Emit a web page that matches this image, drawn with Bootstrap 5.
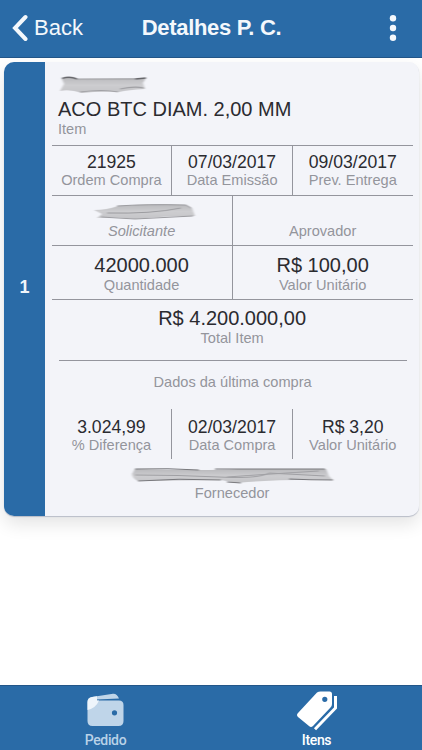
<!DOCTYPE html>
<html lang="pt-BR">
<head>
<meta charset="utf-8">
<meta name="viewport" content="width=device-width, initial-scale=1">
<title>Detalhes P. C.</title>
<link href="https://cdn.jsdelivr.net/npm/bootstrap@5.3.0/dist/css/bootstrap.min.css" rel="stylesheet">
<style>
body{font-family:"Liberation Sans",Arial,sans-serif;height:750px;background:#fff;overflow:hidden}
svg{display:block}
.topbar{height:58px;background:#2a6ba7;border-bottom:1px solid #235689;color:#f4f8fc;font-size:22px;line-height:26px;padding:0 24px 2px 11px}
.topbar a{color:inherit;width:114px;gap:6px}
.topbar h1{font-size:22px;letter-spacing:-.3px;line-height:26px}
.menu-btn{width:100px}
.order{margin:4px 3px 0 4px;height:454px;border-radius:10px;background:#f3f4f9;box-shadow:0 1px 1px #b9bdc8,0 8px 18px rgba(0,0,0,.11);overflow:hidden}
.strip{width:41px;background:#2a6ba7;color:#f0f5fa;font-size:18px;font-weight:700;padding-bottom:3px}
.details{padding:0 6.400px 0 6.600px;color:#2b2b30}
.line-row{border-top:1px solid #94959d}
.line-row>.cell+.cell,.last-row>.cell+.cell{border-left:1px solid #94959d}
.cell{flex:1 1 0;text-align:center}
.val{font-size:17.6px;line-height:20px}
.val-lg{font-size:20px;line-height:22px}
.lbl{font-size:14.6px;line-height:18px;color:#94959c}
.val+.lbl{margin-top:-1px}
.item-row{height:83px;padding:13px 7px 0 6.400px}
.item-row svg{margin-bottom:3px}
.dates{height:50px;padding:0}
.dates .cell{padding-top:6px}
.people{height:50px}
.people .cell{padding-top:5px}
.scribble-box{height:21px;padding-top:1px}
.amounts{height:54px}
.amounts .cell{padding-top:8px}
.total{height:61px;padding-top:7px;text-align:center}
.last-title{margin:0 6px 0 7px;border-top:1px solid #94959d;height:49px;padding-top:12px;text-align:center}
.last-row{height:50px}
.last-row .cell{padding-top:8px}
.supplier{padding-top:8px}
.supplier svg{margin-bottom:-1px}
.tabs{height:65px;background:#2a6ba7;border-top:1px solid #235689;font-family:Roboto,sans-serif;font-weight:500;font-size:14px;letter-spacing:-.35px;line-height:16px}
.tabs a{color:#b9d2e8;padding-top:5px}
.tabs a.active{color:#fff}
.tabs span{padding-top:1px}
</style>
<script src="https://cdn.jsdelivr.net/npm/bootstrap@5.3.0/dist/js/bootstrap.bundle.min.js"></script>
</head>
<body class="d-flex flex-column">
<svg width="0" height="0" class="position-absolute" aria-hidden="true">
  <defs>
    <filter id="soft" x="-10%" y="-30%" width="120%" height="160%"><feGaussianBlur stdDeviation="1.200 .7"/></filter>
    <linearGradient id="smear" x1="0" y1="0" x2="0" y2="1"><stop offset="0" stop-color="#b9b9bc"/><stop offset=".5" stop-color="#cdcdd0"/><stop offset="1" stop-color="#c4c4c7"/></linearGradient>
  </defs>
</svg>
<header class="topbar d-flex align-items-center justify-content-between flex-shrink-0">
  <a href="#" class="d-flex align-items-center text-decoration-none">
    <svg width="17" height="28" viewBox="0 0 17 28" fill="none" stroke="currentColor" stroke-width="4" stroke-linecap="round" stroke-linejoin="miter"><path d="M14.500 3 4 14 14.500 25"/></svg>
    <span>Back</span>
  </a>
  <h1 class="m-0 fw-bold">Detalhes P. C.</h1>
  <div class="menu-btn d-flex justify-content-end" role="button" aria-label="Menu">
    <svg width="10" height="28" viewBox="0 0 10 28" fill="currentColor"><circle cx="5" cy="4.300" r="3.200"/><circle cx="5" cy="14" r="3.200"/><circle cx="5" cy="23.700" r="3.200"/></svg>
  </div>
</header>
<main class="flex-grow-1">
  <section class="order d-flex">
    <div class="strip d-flex align-items-center justify-content-center flex-shrink-0">1</div>
    <div class="details flex-grow-1">
      <div class="item-row">
        <svg width="92" height="20" viewBox="0 0 92 20"><g filter="url(#soft)"><path d="M4 4Q12 1 19 4L88 3 85 8 87 14Q70 15 61 17 40 16 24 18 12 14 2 16L6 9Z" fill="url(#smear)"/><path d="M4 3.500Q12 1 19 4M77 4 88 3" fill="none" stroke="#66666a" stroke-width="1.500"/><path d="M19 4H78M62 14Q76 11 86 13M22 17Q45 14 60 17" fill="none" stroke="#a0a0a4" stroke-width="1.200"/></g></svg>
        <div class="val-lg">ACO BTC DIAM. 2,00 MM</div>
        <div class="lbl">Item</div>
      </div>
      <div class="line-row dates d-flex">
        <div class="cell"><div class="val">21925</div><div class="lbl">Ordem Compra</div></div>
        <div class="cell"><div class="val">07/03/2017</div><div class="lbl">Data Emissão</div></div>
        <div class="cell"><div class="val">09/03/2017</div><div class="lbl">Prev. Entrega</div></div>
      </div>
      <div class="line-row people d-flex">
        <div class="cell">
          <div class="scribble-box d-flex justify-content-center"><svg width="110" height="20" viewBox="0 0 110 20"><g filter="url(#soft)"><path d="M7 8Q20 8 31 4 65 1 99 3L105 6 108 14Q75 14 48 17 25 14 10 16L15 12Z" fill="url(#smear)"/><path d="M30 4Q60 2 99 3L104 6M20 11Q65 12 94 6M14 15 48 17 106 14" fill="none" stroke="#9c9ca0"/></g></svg></div>
          <div class="lbl fst-italic">Solicitante</div>
        </div>
        <div class="cell"><div class="scribble-box"></div><div class="lbl">Aprovador</div></div>
      </div>
      <div class="line-row amounts d-flex">
        <div class="cell"><div class="val-lg">42000.000</div><div class="lbl">Quantidade</div></div>
        <div class="cell"><div class="val-lg">R$ 100,00</div><div class="lbl">Valor Unitário</div></div>
      </div>
      <div class="line-row total"><div class="val-lg">R$ 4.200.000,00</div><div class="lbl">Total Item</div></div>
      <div class="last-title lbl">Dados da última compra</div>
      <div class="last-row d-flex">
        <div class="cell"><div class="val">3.024,99</div><div class="lbl">% Diferença</div></div>
        <div class="cell"><div class="val">02/03/2017</div><div class="lbl">Data Compra</div></div>
        <div class="cell"><div class="val">R$ 3,20</div><div class="lbl">Valor Unitário</div></div>
      </div>
      <div class="supplier d-flex flex-column align-items-center">
        <svg width="206" height="18" viewBox="0 0 206 18"><g filter="url(#soft)"><path d="M6 2Q80 4 109 2L197 2 200 9 204 13Q150 12 107 16L92 13 9 14Q3 11 3 7Z" fill="url(#smear)"/><path d="M6 2Q40 1 70 3M86 2 196 2M9 14Q50 11 92 13M98 15 112 16M160 12Q180 13 204 13" fill="none" stroke="#77777b"/><path d="M6 8Q50 8 90 10T140 6L196 9M98 10Q140 7 190 4" fill="none" stroke="#a0a0a4"/></g></svg>
        <div class="lbl">Fornecedor</div>
      </div>
    </div>
  </section>
</main>
<nav class="tabs d-flex flex-shrink-0">
  <a href="#" class="d-flex flex-column align-items-center text-decoration-none w-50">
    <svg width="40" height="40" viewBox="0 0 40 40"><path fill="#bfd5e9" fill-rule="evenodd" d="M1.500 11Q1.500 6.500 6 6L27 2.800Q31 2.500 33 7.500L10 8.500V9.500H33Q37.500 9.500 37.500 14V30Q37.500 35 32.500 35H6.500Q1.500 35 1.500 30ZM28.500 19.200a2.600 2.600 0 1 0 0 5.200a2.600 2.600 0 1 0 0-5.200Z"/><path fill="#eef5fb" d="M1.500 19V11Q1.500 7 6 6L11 5.200V9.500H13Q10 17 1.500 19Z"/></svg>
    <span>Pedido</span>
  </a>
  <a href="#" class="active d-flex flex-column align-items-center text-decoration-none w-50">
    <svg width="42" height="40" viewBox="0 0 42 40"><path fill="currentColor" fill-rule="evenodd" d="M21 1.500Q22.500 .5 24.500 .5H33.500Q36 .5 36 3V13Q36 15 34.500 16.500L17 35Q15 37 13 35L2 26Q0 24 2 22ZM28.800 5.700a2.600 2.600 0 1 0 0 5.200a2.600 2.600 0 1 0 0-5.200Z"/><path d="M39.500 5V17L19 38.200" fill="none" stroke="currentColor" stroke-width="3"/></svg>
    <span>Itens</span>
  </a>
</nav>
</body>
</html>
